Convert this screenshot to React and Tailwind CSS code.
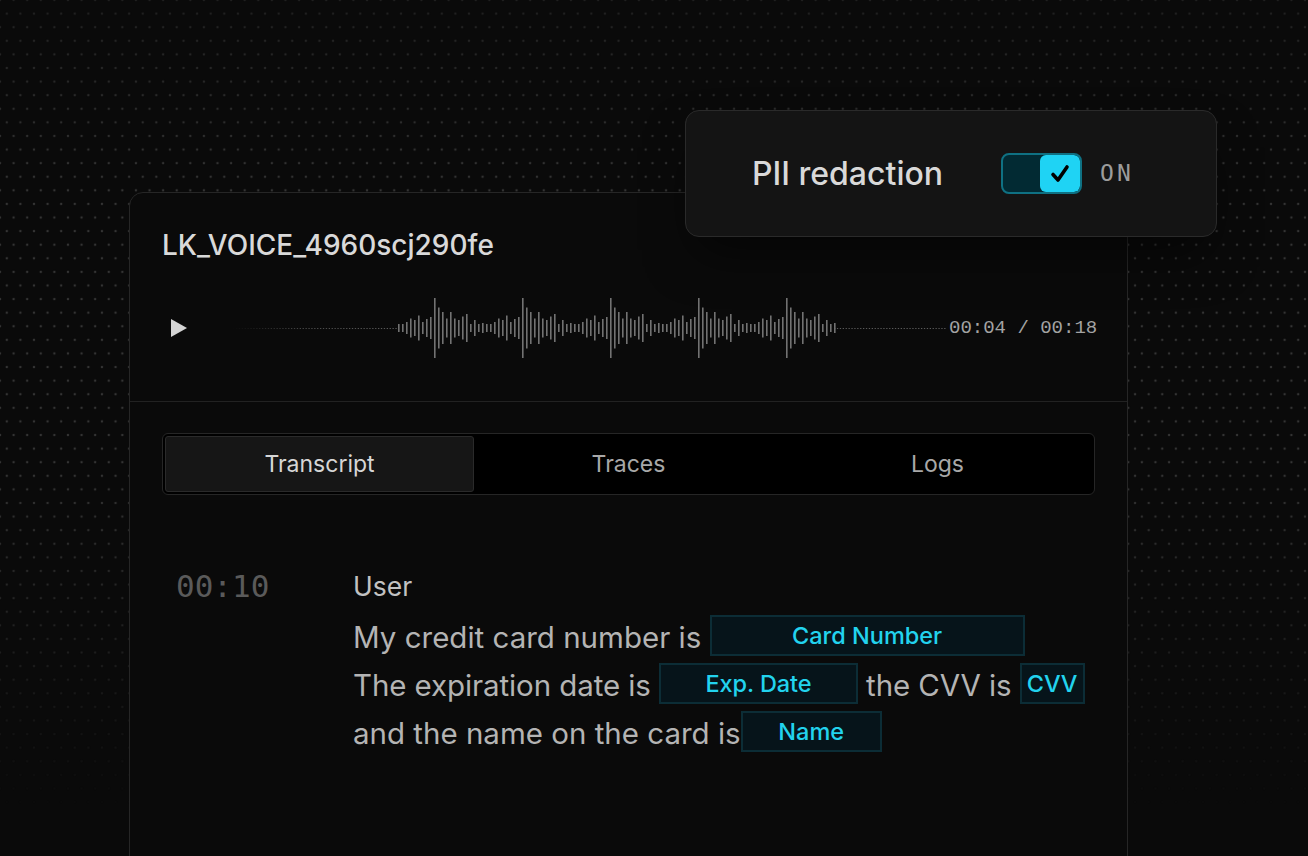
import React from 'react'

// one period of the waveform, starting on the tall bar
const PERIOD = [60, 41, 32, 19, 32, 19, 16, 23, 28, 8, 16, 8, 10, 8, 8, 12, 19, 16, 25, 12, 18, 22]

const BARS = [
  ...PERIOD.slice(13),
  ...PERIOD, ...PERIOD, ...PERIOD, ...PERIOD,
  ...PERIOD.slice(0, 13),
]

function Waveform() {
  return (
    <svg width="745" height="70" viewBox="0 0 745 70" className="shrink-0">
      <defs>
        <linearGradient id="fadeL" x1="32" x2="196" y1="0" y2="0" gradientUnits="userSpaceOnUse">
          <stop offset="0" stopColor="#4a4a4a" stopOpacity="0" />
          <stop offset="0.45" stopColor="#4a4a4a" stopOpacity="1" />
          <stop offset="1" stopColor="#5a5a5a" stopOpacity="1" />
        </linearGradient>
      </defs>
      <line x1="32" x2="196" y1="35.5" y2="35.5" stroke="url(#fadeL)" strokeWidth="1" strokeDasharray="1.3 1.6" />
      <line x1="633" x2="745" y1="35.5" y2="35.5" stroke="#5a5a5a" strokeWidth="1" strokeDasharray="1.3 1.6" />
      {BARS.map((h, i) => (
        <rect key={i} x={197 + i * 4} y={35 - h / 2} width="1.6" height={h} fill="#727272" />
      ))}
    </svg>
  )
}

function Chip({ w, children }) {
  return (
    <span
      className={`relative -top-1 inline-flex h-[41px] items-center justify-center border-2 border-[#0c2d36] bg-[#06141a] align-middle text-[23.5px] font-medium leading-none text-[#22d3ee] ${w}`}
    >
      {children}
    </span>
  )
}

export default function App() {
  return (
    <div className="relative h-[856px] w-[1308px] overflow-hidden bg-[#0a0a0a] font-['Inter','Liberation_Sans',sans-serif]">
      {/* dotted backdrop */}
      <div className="pointer-events-none absolute inset-0 [background-image:radial-gradient(circle,#343434_1.1px,transparent_1.6px),radial-gradient(circle,#343434_1.1px,transparent_1.6px)] [background-size:13.6px_27.2px] [background-position:0_0,6.8px_13.6px] [mask-image:linear-gradient(to_bottom,rgba(0,0,0,0.5)_0%,black_22%,black_55%,transparent_95%)]" />

      {/* call card */}
      <div className="relative ml-[129px] mt-[192px] h-[700px] w-[999px] rounded-t-[14px] border border-[#262626] bg-[#0a0a0a]">
        <div className="border-b border-[#222] px-8 pb-[38px] pt-[34px]">
          <h1 className="text-[28px] font-medium leading-9 text-[#d9d9d9]">LK_VOICE_4960scj290fe</h1>
          <div className="mt-[30px] flex h-[70px] items-center">
            <svg width="16" height="18" viewBox="0 0 16 18" className="ml-[9px] mr-[14px] shrink-0">
              <path d="M0 0 L16 9 L0 18 Z" fill="#d4d4d4" />
            </svg>
            <Waveform />
            <span className="ml-[3px] whitespace-nowrap font-['Liberation_Mono','DejaVu_Sans_Mono',monospace] text-[19px] text-[#a3a3a3]">
              00:04 / 00:18
            </span>
          </div>
        </div>

        <div className="px-8 pt-[31px]">
          <div className="grid h-[62px] grid-cols-3 rounded-md border border-[#262626] bg-black p-[2px]">
            <div className="flex items-center justify-center rounded-[3px] border border-[#2a2a2a] bg-[#161616] text-[23px] text-[#d6d6d6]">
              Transcript
            </div>
            <div className="flex items-center justify-center text-[23px] text-[#a8a8a8]">Traces</div>
            <div className="flex items-center justify-center text-[23px] text-[#a8a8a8]">Logs</div>
          </div>

          <div className="mt-[73px] flex pl-[14px]">
            <div className="w-[177px] shrink-0 font-['DejaVu_Sans_Mono','Liberation_Mono',monospace] text-[31px] leading-9 text-[#5a5a5a]">
              00:10
            </div>
            <div className="text-[#b4b4b4]">
              <div className="text-[26.5px] leading-9 text-[#c2c2c2]">User</div>
              <div className="mt-[9px] text-[29.5px] leading-[48px]">
                <div>
                  My credit card number is <Chip w="w-[315px]">Card Number</Chip>
                </div>
                <div className="tracking-[-0.1px]">
                  The expiration date is <Chip w="w-[199px]">Exp. Date</Chip> the CVV is <Chip w="w-[65px]">CVV</Chip>
                </div>
                <div>
                  and the name on the card is<Chip w="w-[141px]">Name</Chip>
                </div>
              </div>
            </div>
          </div>
        </div>
      </div>

      {/* PII redaction panel, floating over the card */}
      <div className="absolute left-[685px] top-[110px] flex h-[127px] w-[532px] items-center rounded-[14px] border border-[#2a2a2a] bg-[#141414] pl-[66px] shadow-2xl shadow-black/60">
        <span className="text-[32px] font-medium text-[#d9d9d9]">PII redaction</span>
        <div className="ml-[58px] flex h-[41px] w-[81px] shrink-0 overflow-hidden rounded-[8px] border-2 border-[#0f7183] bg-[#022a33]">
          <div className="flex-1" />
          <div className="flex w-[40px] items-center justify-center rounded-[6px] bg-[#1fd3f4]">
            <svg width="22" height="22" viewBox="0 0 22 22">
              <path d="M4 11.5 L9 17 L18 4" fill="none" stroke="#000" strokeWidth="3.6" strokeLinecap="round" strokeLinejoin="round" />
            </svg>
          </div>
        </div>
        <span className="ml-[18px] font-['DejaVu_Sans_Mono','Liberation_Mono',monospace] text-[23px] tracking-[0.14em] text-[#9c9c9c]">
          ON
        </span>
      </div>
    </div>
  )
}
